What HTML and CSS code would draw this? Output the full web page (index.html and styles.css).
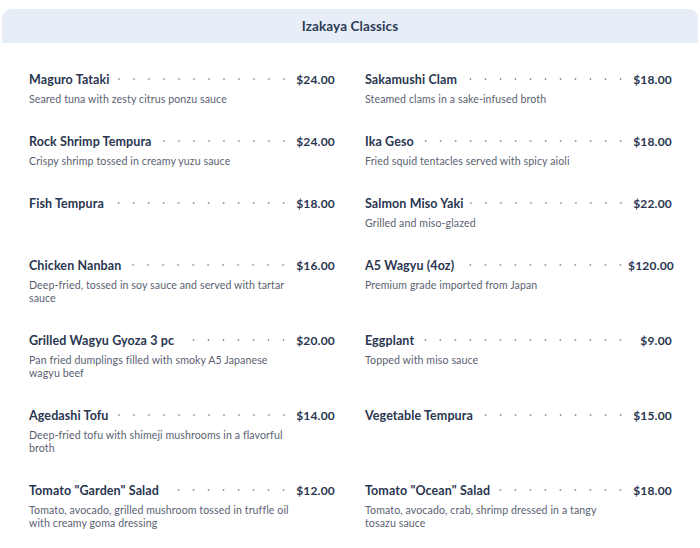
FILE: index.html
```html
<!DOCTYPE html>
<html lang="en">
<head>
<meta charset="utf-8">
<title>Izakaya Classics</title>
<link rel="stylesheet" href="styles.css">
</head>
<body>
<div class="page">
  <header class="section-head"><h1 class="section-title">Izakaya Classics</h1></header>
  <div class="menu">
    <div class="item">
      <div class="line"><span class="name">Maguro Tataki</span><span class="dots"></span><span class="price">$24.00</span></div>
      <p class="desc">Seared tuna with zesty citrus ponzu sauce</p>
    </div>
    <div class="item">
      <div class="line"><span class="name">Sakamushi Clam</span><span class="dots"></span><span class="price">$18.00</span></div>
      <p class="desc">Steamed clams in a sake-infused broth</p>
    </div>
    <div class="item">
      <div class="line"><span class="name">Rock Shrimp Tempura</span><span class="dots"></span><span class="price">$24.00</span></div>
      <p class="desc">Crispy shrimp tossed in creamy yuzu sauce</p>
    </div>
    <div class="item">
      <div class="line"><span class="name">Ika Geso</span><span class="dots"></span><span class="price">$18.00</span></div>
      <p class="desc">Fried squid tentacles served with spicy aioli</p>
    </div>
    <div class="item">
      <div class="line"><span class="name">Fish Tempura</span><span class="dots"></span><span class="price">$18.00</span></div>
    </div>
    <div class="item">
      <div class="line"><span class="name">Salmon Miso Yaki</span><span class="dots"></span><span class="price">$22.00</span></div>
      <p class="desc">Grilled and miso-glazed</p>
    </div>
    <div class="item">
      <div class="line"><span class="name">Chicken Nanban</span><span class="dots"></span><span class="price">$16.00</span></div>
      <p class="desc">Deep-fried, tossed in soy sauce and served with tartar sauce</p>
    </div>
    <div class="item">
      <div class="line"><span class="name">A5 Wagyu (4oz)</span><span class="dots"></span><span class="price">$120.00</span></div>
      <p class="desc">Premium grade imported from Japan</p>
    </div>
    <div class="item">
      <div class="line"><span class="name">Grilled Wagyu Gyoza 3 pc</span><span class="dots"></span><span class="price">$20.00</span></div>
      <p class="desc">Pan fried dumplings filled with smoky A5 Japanese wagyu beef</p>
    </div>
    <div class="item">
      <div class="line"><span class="name">Eggplant</span><span class="dots"></span><span class="price">$9.00</span></div>
      <p class="desc">Topped with miso sauce</p>
    </div>
    <div class="item">
      <div class="line"><span class="name">Agedashi Tofu</span><span class="dots"></span><span class="price">$14.00</span></div>
      <p class="desc">Deep-fried tofu with shimeji mushrooms in a flavorful broth</p>
    </div>
    <div class="item">
      <div class="line"><span class="name">Vegetable Tempura</span><span class="dots"></span><span class="price">$15.00</span></div>
    </div>
    <div class="item">
      <div class="line"><span class="name">Tomato "Garden" Salad</span><span class="dots"></span><span class="price">$12.00</span></div>
      <p class="desc">Tomato, avocado, grilled mushroom tossed in truffle oil with creamy goma dressing</p>
    </div>
    <div class="item">
      <div class="line"><span class="name">Tomato "Ocean" Salad</span><span class="dots"></span><span class="price">$18.00</span></div>
      <p class="desc">Tomato, avocado, crab, shrimp dressed in a tangy tosazu sauce</p>
    </div>
  </div>
</div>
</body>
</html>
```

FILE: styles.css
```css
* { box-sizing: border-box; }

body {
  margin: 0;
  background: #ffffff;
  font-family: Lato, "Open Sans", "Liberation Sans", sans-serif;
  color: #2a3650;
}

.page {
  padding-top: 9px;
}

.section-head {
  margin: 0 2px;
  height: 34px;
  background: #e7eef7;
  border-radius: 9px 9px 0 0;
  display: flex;
  align-items: center;
  justify-content: center;
}

.section-title {
  margin: 0;
  font-size: 13.5px;
  font-weight: 700;
  color: #2d3b55;
  letter-spacing: 0.1px;
}

.menu {
  display: grid;
  grid-template-columns: 306px 307px;
  column-gap: 30px;
  row-gap: 25px;
  padding: 26px 28px 0 29px;
}

.line {
  display: grid;
  grid-template-columns: auto 1fr 44px;
  align-items: center;
  height: 20px;
}

.name {
  font-size: 12.5px;
  font-weight: 700;
  color: #2a3650;
  white-space: nowrap;
  padding-right: 6px;
  letter-spacing: 0.1px;
}

.dots {
  height: 4px;
  background-image: radial-gradient(circle, #8d94a0 0.75px, rgba(255,255,255,0) 1.2px);
  background-size: 15px 4px;
  background-repeat: repeat-x;
  background-position: right center;
}

.price {
  font-size: 12px;
  font-weight: 700;
  color: #2a3650;
  text-align: right;
  white-space: nowrap;
  letter-spacing: 0.2px;
}

.desc {
  margin: 4px 0 0;
  max-width: 262px;
  font-size: 10.6px;
  line-height: 13px;
  color: #5a6272;
  letter-spacing: 0.1px;
}
```
